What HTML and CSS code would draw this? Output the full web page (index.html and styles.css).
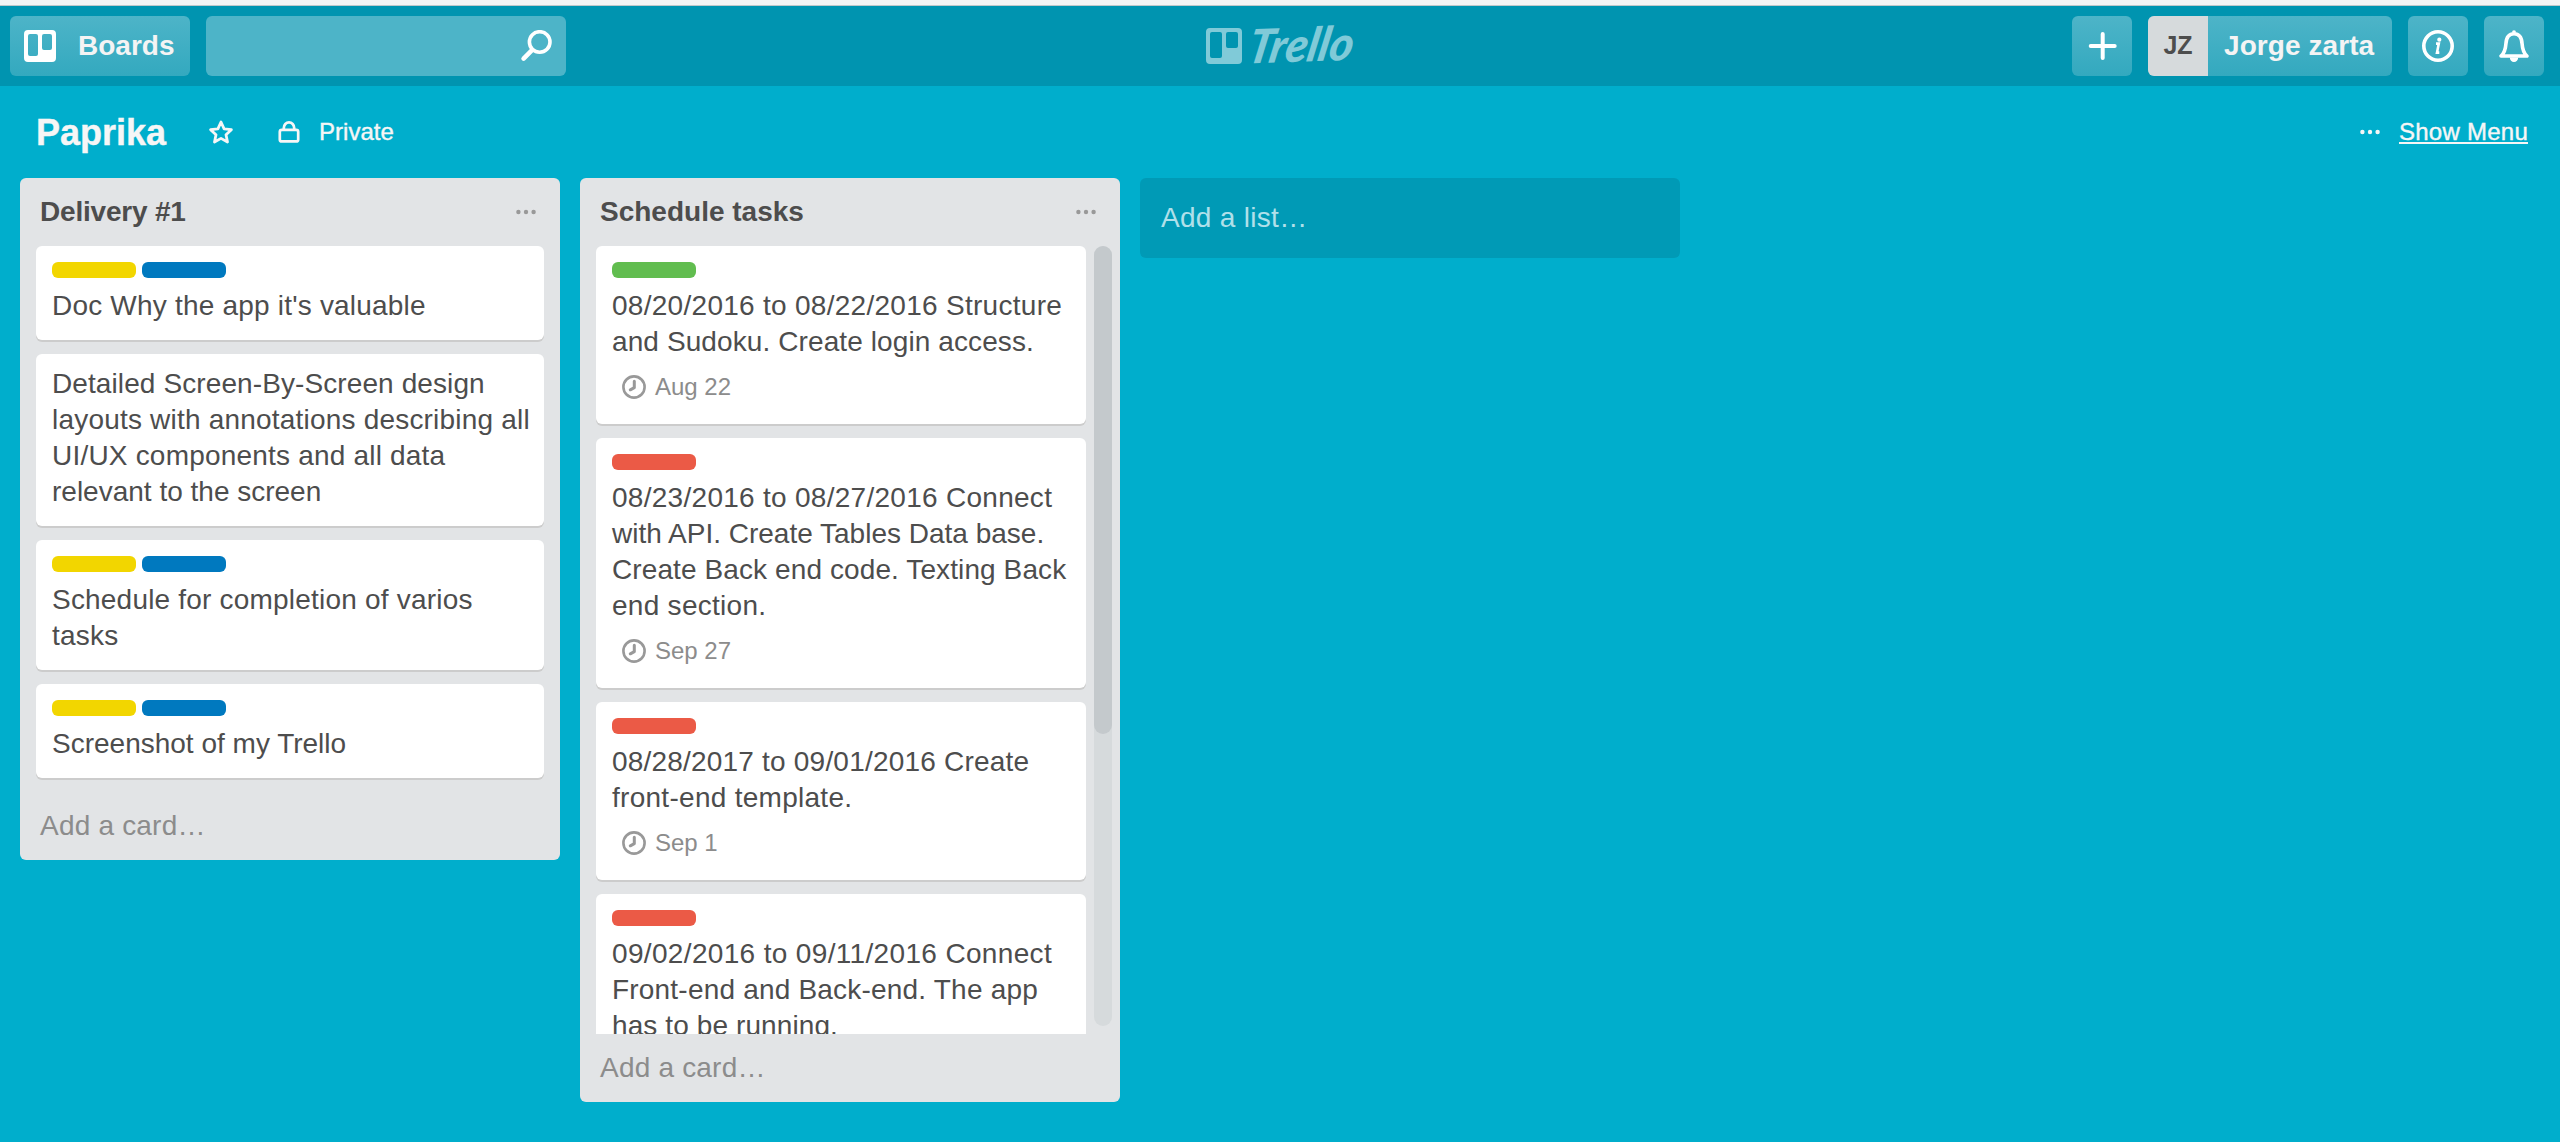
FILE: index.html
```html
<!DOCTYPE html>
<html lang="en">
<head>
<meta charset="utf-8">
<title>Paprika | Trello</title>
<link rel="stylesheet" href="styles.css">
</head>
<body>
<svg class="sprite" aria-hidden="true">
  <symbol id="dots" viewBox="0 0 20 6"><circle cx="2.4" cy="3" r="2.2"/><circle cx="10" cy="3" r="2.2"/><circle cx="17.6" cy="3" r="2.2"/></symbol>
  <symbol id="clock" viewBox="0 0 24 24"><circle cx="12" cy="12" r="10.6" fill="none" stroke="currentColor" stroke-width="2.6"/><path d="M12.3 6.2v6.5L8.3 14.8" fill="none" stroke="currentColor" stroke-width="3" stroke-linecap="round" stroke-linejoin="round"/></symbol>
</svg>
<div class="window-edge"></div>
<header class="header">
  <div class="header-side">
    <a class="button boards">
      <svg width="32" height="32" viewBox="0 0 32 32"><path fill="#fff" fill-rule="evenodd" d="M4 0h24a4 4 0 0 1 4 4v24a4 4 0 0 1-4 4H4a4 4 0 0 1-4-4V4a4 4 0 0 1 4-4zM6 4a2 2 0 0 0-2 2v18a2 2 0 0 0 2 2h6a2 2 0 0 0 2-2V6a2 2 0 0 0-2-2zM20 4a2 2 0 0 0-2 2v12a2 2 0 0 0 2 2h6a2 2 0 0 0 2-2V6a2 2 0 0 0-2-2z"/></svg>
      <span>Boards</span>
    </a>
    <div class="search">
      <svg width="32" height="32" viewBox="0 0 32 32" fill="none" stroke="#fff" stroke-linecap="round"><circle cx="19.7" cy="12" r="10.3" stroke-width="3.6"/><path d="M12 20.2 3.6 28.6" stroke-width="4.6"/></svg>
    </div>
  </div>
  <a class="logo">
    <svg width="160" height="72" viewBox="0 0 160 72" fill="#80cad8">
      <path fill-rule="evenodd" d="M4 18h28a4 4 0 0 1 4 4v28a4 4 0 0 1-4 4H4a4 4 0 0 1-4-4V22a4 4 0 0 1 4-4zM6 22a2 2 0 0 0-2 2v22a2 2 0 0 0 2 2h8a2 2 0 0 0 2-2V24a2 2 0 0 0-2-2zM22 22a2 2 0 0 0-2 2v12a2 2 0 0 0 2 2h8a2 2 0 0 0 2-2V24a2 2 0 0 0-2-2z"/>
      <text class="wordmark" transform="translate(40 53.500) rotate(-2) skewX(-13)" textLength="105" lengthAdjust="spacingAndGlyphs">Trello</text>
    </svg>
  </a>
  <div class="header-side header-right">
    <a class="button square"><svg width="60" height="60" viewBox="0 0 60 60" stroke="#fff" stroke-width="4" stroke-linecap="round"><path d="M30.7 18v24M18.7 30h24"/></svg></a>
    <a class="button member"><span class="avatar">JZ</span><span class="member-name">Jorge zarta</span></a>
    <a class="button square"><svg width="60" height="60" viewBox="0 0 60 60" fill="none" stroke="#fff"><circle cx="30" cy="30" r="14.2" stroke-width="3.6"/><path d="M28 27.600h2.800l-1.800 9h2.300" stroke-width="2.600"/><circle cx="31.300" cy="23.700" r="2.100" fill="#fff" stroke="none"/></svg></a>
    <a class="button square"><svg width="60" height="60" viewBox="0 0 60 60"><path d="M17 40c4.200-3.600 4.600-7.600 4.900-12.200.4-5.800 2.900-10 8.100-10s7.700 4.200 8.100 10c.3 4.600.7 8.600 4.900 12.200z" fill="none" stroke="#fff" stroke-width="3.600" stroke-linejoin="round"/><path d="M28 16.600a2 2.400 0 0 1 4 0zM25.800 41.500h8.400a4.200 4.600 0 0 1-8.400 0z" fill="#fff"/></svg></a>
  </div>
</header>
<div class="board-bar">
  <h1 class="board-name">Paprika</h1>
  <svg class="star" width="26" height="26" viewBox="0 0 26 26"><path d="M13 3l3.100 6.800 7.300.900-5.400 5 1.500 7.300L13 19.400 6.500 23 8 15.700l-5.400-5 7.300-.900z" fill="none" stroke="#f6f6f6" stroke-width="2.800" stroke-linejoin="round"/></svg>
  <span class="visibility">
    <svg width="22" height="24" viewBox="0 0 22 24" fill="none" stroke="#f6f6f6" stroke-width="2.700"><rect x="1.800" y="9.800" width="18.400" height="11.600" rx="2"/><path d="M5.800 9.500V8a5.200 5.700 0 0 1 10.400 0v1.500"/></svg>
    <span>Private</span>
  </span>
  <a class="show-menu"><svg width="20" height="6" fill="#f6f6f6"><use href="#dots"/></svg><span>Show Menu</span></a>
</div>
<main class="board">
  <section class="list">
    <div class="list-head"><h2 class="tight">Delivery #1</h2><svg width="20" height="6"><use href="#dots"/></svg></div>
    <div class="cards">
      <article class="card">
        <div class="labels"><i class="label yellow"></i><i class="label blue"></i></div>
        <p>Doc Why the app it's valuable</p>
      </article>
      <article class="card">
        <p><span class="near">Detailed Screen-By-Screen design</span><br>layouts with annotations describing all<br>UI/UX components and all data<br><span class="snug">relevant to the screen</span></p>
      </article>
      <article class="card">
        <div class="labels"><i class="label yellow"></i><i class="label blue"></i></div>
        <p>Schedule for completion of varios<br>tasks</p>
      </article>
      <article class="card">
        <div class="labels"><i class="label yellow"></i><i class="label blue"></i></div>
        <p class="snug">Screenshot of my Trello</p>
      </article>
    </div>
    <a class="add-card">Add a card…</a>
  </section>
  <section class="list">
    <div class="list-head"><h2>Schedule tasks</h2><svg width="20" height="6"><use href="#dots"/></svg></div>
    <div class="scroller">
      <div class="cards">
        <article class="card">
          <div class="labels"><i class="label green"></i></div>
          <p><span class="wide">08/20/2016 to 08/22/2016 Structure</span><br><span class="near">and Sudoku. Create login access.</span></p>
          <div class="due"><svg width="24" height="24"><use href="#clock"/></svg><span>Aug 22</span></div>
        </article>
        <article class="card">
          <div class="labels"><i class="label red"></i></div>
          <p><span class="wide">08/23/2016 to 08/27/2016 Connect</span><br><span class="snug">with API. Create Tables Data base.</span><br><span class="near">Create Back end code. Texting Back</span><br><span class="wide">end section.</span></p>
          <div class="due"><svg width="24" height="24"><use href="#clock"/></svg><span>Sep 27</span></div>
        </article>
        <article class="card">
          <div class="labels"><i class="label red"></i></div>
          <p>08/28/2017 to 09/01/2016 Create<br><span class="wide">front-end template.</span></p>
          <div class="due"><svg width="24" height="24"><use href="#clock"/></svg><span>Sep 1</span></div>
        </article>
        <article class="card">
          <div class="labels"><i class="label red"></i></div>
          <p><span class="wider">09/02/2016 to 09/11/2016 Connect</span><br>Front-end and Back-end. The app<br><span class="near">has to be running.</span></p>
        </article>
      </div>
      <div class="track"><div class="thumb"></div></div>
    </div>
    <a class="add-card">Add a card…</a>
  </section>
  <a class="add-list">Add a list…</a>
</main>
</body>
</html>
```
FILE: styles.css
```css
* { box-sizing: border-box; }
body {
  margin: 0;
  height: 1142px;
  overflow: hidden;
  background: #00aecc;
  color: #4d4d4d;
  font: 28px/36px "Liberation Sans", Arial, sans-serif;
}
h1, h2, p { margin: 0; }
svg { display: block; flex: none; }
.sprite { display: none; }

.window-edge { height: 6px; background: #f4f4f4; border-bottom: 1px solid #c0c8ca; }

/* Header */
.header {
  display: grid;
  grid-template-columns: 1fr auto 1fr;
  align-items: center;
  height: 80px;
  padding: 0 16px 0 10px;
  background: #0094b0;
}
.header-side { display: flex; gap: 16px; }
.header-right { justify-content: flex-end; }
.button {
  display: flex;
  align-items: center;
  height: 60px;
  border-radius: 6px;
  overflow: hidden;
  background: linear-gradient(#4db4c8, #33a9bf);
  color: #f4f4f4;
  font-weight: bold;
}
.boards { width: 180px; padding-left: 14px; gap: 22px; }
.search {
  display: flex;
  align-items: center;
  justify-content: flex-end;
  width: 360px;
  height: 60px;
  padding-right: 14px;
  border-radius: 6px;
  background: #4db4c8;
}
.logo { margin-left: 17px; }
.logo svg { overflow: visible; }
.wordmark { font: italic 900 47px Lato, "Liberation Sans", sans-serif; }
.square { width: 60px; }
.member { width: 244px; }
.avatar {
  width: 60px;
  height: 60px;
  background: #d6dadc;
  color: #4d4d4d;
  font-size: 25px;
  line-height: 58px;
  text-align: center;
}
.member-name { padding-left: 16px; letter-spacing: .08px; }

/* Board title row */
.board-bar {
  display: flex;
  align-items: center;
  height: 92px;
  padding: 0 32px 0 36px;
  color: #f6f6f6;
  font-size: 24px;
  -webkit-text-stroke: .4px #f6f6f6;
}
.board-name { padding-top: 2px; font-size: 36px; line-height: 44px; }
.star { margin: 0 0 0 42px; }
.visibility { display: flex; align-items: center; margin-left: 44px; gap: 19px; }
.show-menu { display: flex; align-items: center; gap: 19px; margin-left: auto; letter-spacing: .25px; }
.show-menu span {
  text-decoration: underline;
  text-decoration-thickness: 2px;
  text-underline-offset: 2px;
  text-decoration-skip-ink: none;
}

/* Lists */
.board { display: flex; align-items: flex-start; gap: 20px; padding-left: 20px; }
.list { width: 540px; border-radius: 6px; background: #e2e4e6; }
.list-head {
  display: flex;
  align-items: center;
  justify-content: space-between;
  height: 68px;
  padding: 0 24px 0 20px;
  fill: #999;
}
.list-head h2 { font-size: 28px; }
.tight { letter-spacing: -.2px; }
.cards { flex: 1; padding: 0 16px; }
.card {
  margin-bottom: 14px;
  padding: 12px 0 16px 16px;
  border-radius: 6px;
  background: #fff;
  box-shadow: 0 2px #ccc;
}
.card p { letter-spacing: .2px; white-space: nowrap; }
.card .wide { letter-spacing: .28px; }
.card .wider { letter-spacing: .34px; }
.card .near { letter-spacing: .1px; }
.card .snug { letter-spacing: 0; }
.labels { display: flex; gap: 6px; height: 30px; padding-top: 4px; }
.label { width: 84px; height: 16px; border-radius: 6px; }
.yellow { background: #f2d600; }
.blue { background: #0079bf; }
.green { background: #61bd4f; }
.red { background: #eb5a46; }
.due {
  display: flex;
  align-items: center;
  gap: 9px;
  height: 48px;
  padding: 0 0 0 10px;
  margin-top: 3px;
  margin-bottom: -3px;
  color: #8c8c8c;
  font-size: 24px;
}
.due svg { color: #999; }
.add-card { display: block; padding: 16px 20px; color: #8c8c8c; letter-spacing: .2px; }
.list > .cards { height: 546px; }

/* Scrolling card area */
.scroller { display: flex; height: 788px; padding-right: 8px; overflow: hidden; }
.scroller .cards { padding-right: 8px; }
.track { width: 18px; height: 780px; border-radius: 9px; background: #d6dadc; }
.thumb { height: 488px; border-radius: 9px; background: #c4c9cc; }

.add-list {
  width: 540px;
  height: 80px;
  padding: 22px 21px;
  border-radius: 6px;
  background: #009ab6;
  color: #b0e0ea;
  letter-spacing: .3px;
}
```
